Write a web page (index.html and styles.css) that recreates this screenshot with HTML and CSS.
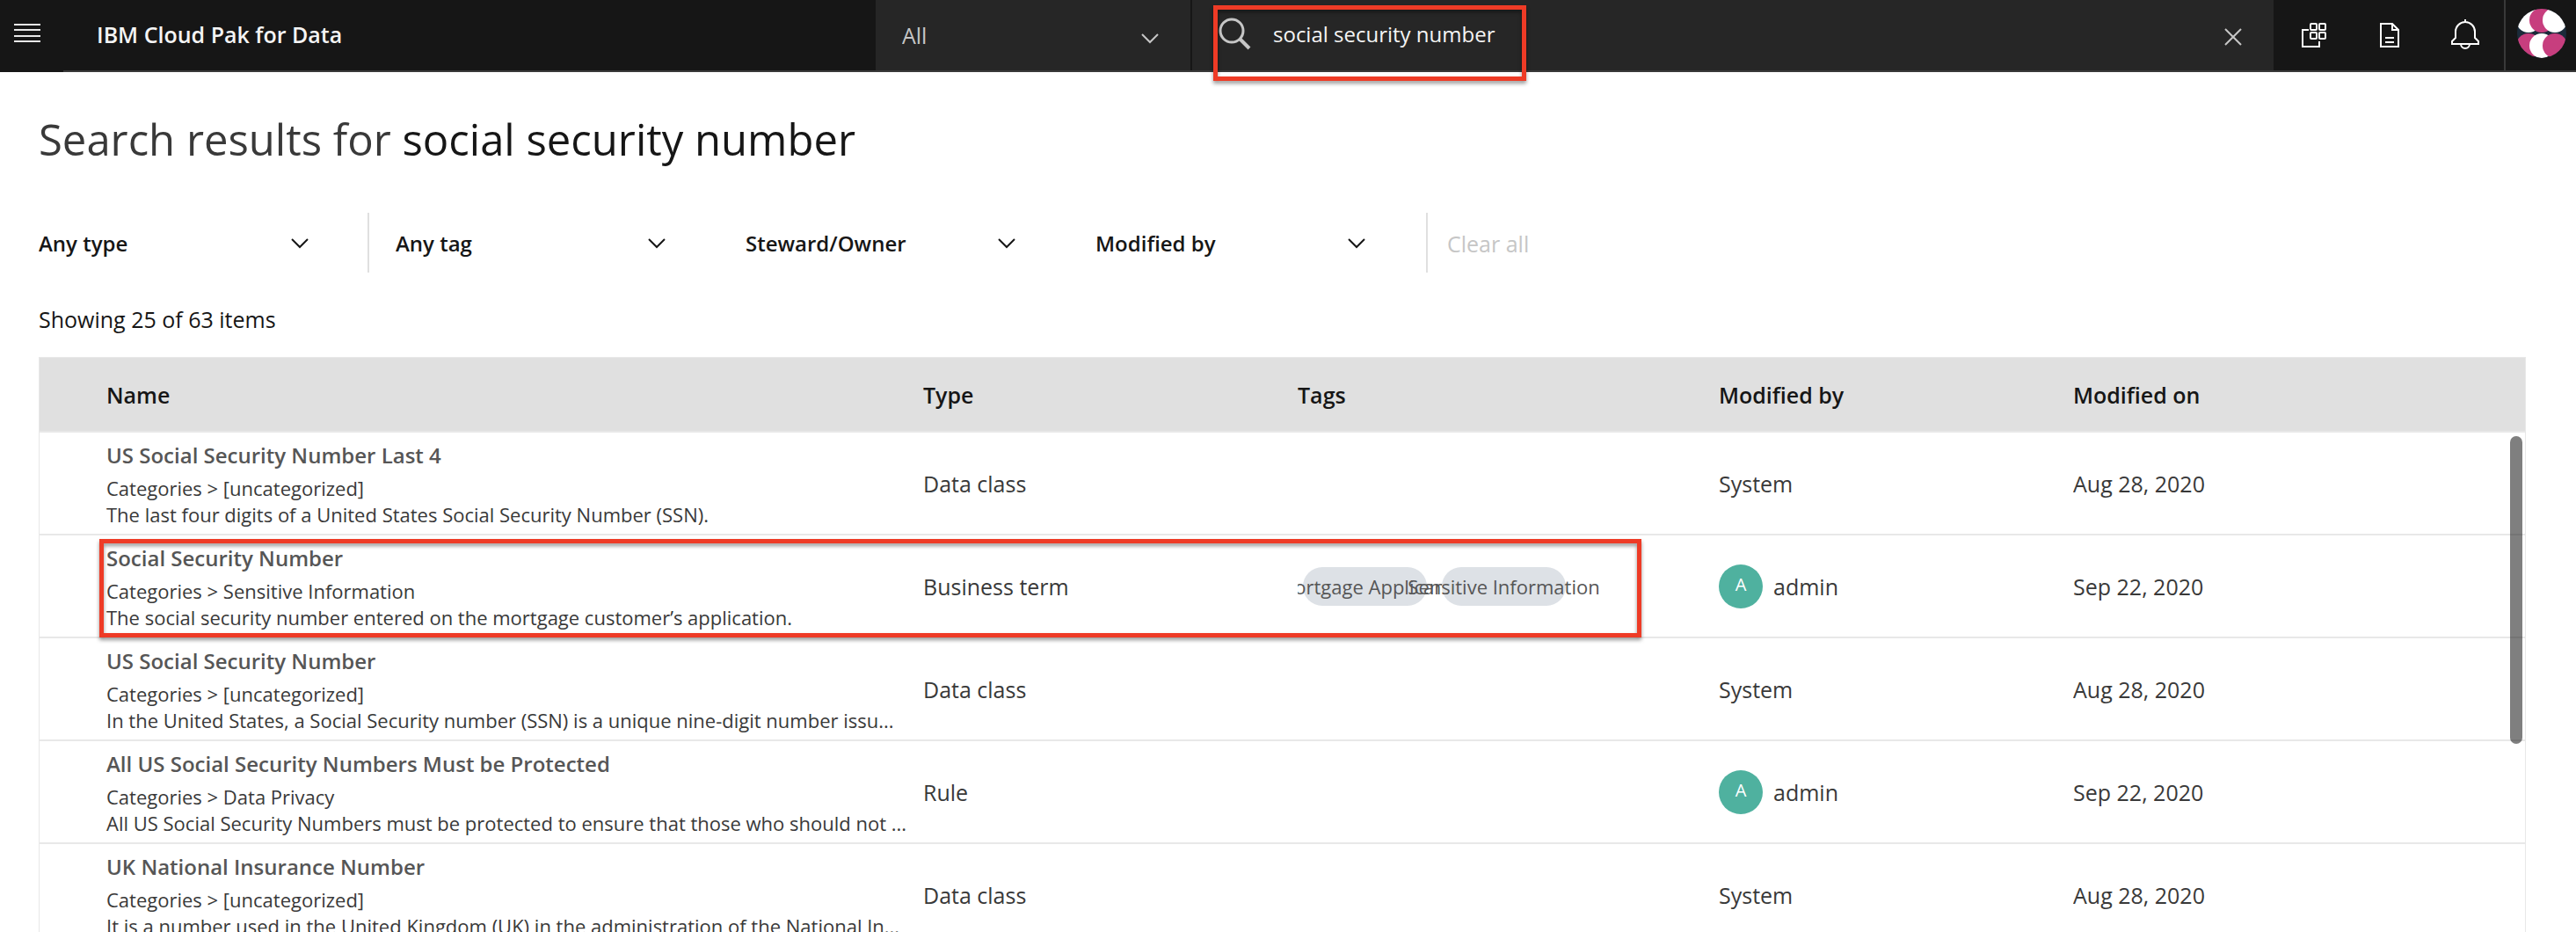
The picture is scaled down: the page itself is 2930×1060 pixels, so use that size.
FILE: index.html
```html
<!DOCTYPE html>
<html lang="en">
<head>
<meta charset="utf-8">
<title>Search results - IBM Cloud Pak for Data</title>
<link rel="stylesheet" href="styles.css">
</head>
<body>
<header class="topbar">
  <button class="menu-button" aria-label="Menu">
    <svg width="30" height="24" viewBox="0 0 30 24"><path d="M0 2h30M0 8h30M0 15h30M0 21h30" stroke="#e8e8e8" stroke-width="2"/></svg>
  </button>
  <div class="topbar-main">
    <a class="brand" href="#">IBM Cloud Pak for Data</a>
    <div class="scope">
      <select class="scope-select" aria-label="Search scope"><option>All</option></select>
      <svg class="chevron" width="20" height="12" viewBox="0 0 20 12"><path d="M1 1l9 9 9-9" fill="none" stroke="#c6c6c6" stroke-width="2"/></svg>
    </div>
    <div class="search">
      <div class="search-field">
        <svg width="38" height="38" viewBox="0 0 38 38"><circle cx="15" cy="15" r="13" fill="none" stroke="#c6c6c6" stroke-width="3"/><path d="M24 24l11 11" stroke="#c6c6c6" stroke-width="4"/></svg>
        <input class="search-input" type="text" aria-label="Search" value="social security number">
        <span class="callout callout-search"></span>
      </div>
      <button class="icon-button" aria-label="Clear search">
        <svg width="20" height="20" viewBox="0 0 20 20"><path d="M1 1l18 18M19 1L1 19" stroke="#c6c6c6" stroke-width="2"/></svg>
      </button>
    </div>
    <nav class="actions">
      <button class="icon-button" aria-label="Apps">
        <svg width="28" height="28" viewBox="0 0 28 28" fill="none" stroke="#fff" stroke-width="2"><path d="M8 8H1v19h19v-6"/><rect x="10" y="1" width="7" height="7" rx="1"/><rect x="20" y="1" width="7" height="7" rx="1"/><rect x="10" y="11" width="7" height="7" rx="1"/><rect x="20" y="11" width="7" height="7" rx="1"/></svg>
      </button>
      <button class="icon-button" aria-label="Documents">
        <svg width="22" height="28" viewBox="0 0 22 28" fill="none" stroke="#fff" stroke-width="2"><path d="M1 1h13l7 7v19H1zM14 1v7h7M6 17h10M6 22h10"/></svg>
      </button>
      <button class="icon-button" aria-label="Notifications">
        <svg width="32" height="36" viewBox="0 0 32 36" fill="none" stroke="#fff" stroke-width="2"><path d="M16 0v3M5 14a11 11 0 0 1 22 0v7l4 4v3H1v-3l4-4zM11 28a5 5 0 0 0 10 0"/></svg>
      </button>
    </nav>
    <button class="profile" aria-label="Profile">
      <svg width="58" height="58" viewBox="0 0 58 58"><defs><clipPath id="disc"><circle cx="29" cy="29" r="28"/></clipPath></defs><g clip-path="url(#disc)"><path fill="#1b2b3a" d="M0 0h58v58H0z"/><circle cx="14" cy="14" r="14" fill="#fff"/><circle cx="29" cy="14" r="14" fill="#c73e7e"/><circle cx="44" cy="14" r="14" fill="#fff"/><circle cx="14" cy="43" r="14" fill="#c73e7e"/><circle cx="29" cy="43" r="14" fill="#fff"/><circle cx="44" cy="43" r="14" fill="#c73e7e"/></g></svg>
    </button>
  </div>
</header>

<main class="page">
  <h1 class="heading">Search results for <strong>social security number</strong></h1>
  <form class="filters">
    <div class="filter filter-type">
      <select aria-label="Type"><option>Any type</option></select>
      <svg class="chevron" width="20" height="12" viewBox="0 0 20 12"><path d="M1 1l9 9 9-9" fill="none" stroke="#161616" stroke-width="2"/></svg>
    </div>
    <div class="filter">
      <select aria-label="Tag"><option>Any tag</option></select>
      <svg class="chevron" width="20" height="12" viewBox="0 0 20 12"><path d="M1 1l9 9 9-9" fill="none" stroke="#161616" stroke-width="2"/></svg>
    </div>
    <div class="filter">
      <select aria-label="Steward or owner"><option>Steward/Owner</option></select>
      <svg class="chevron" width="20" height="12" viewBox="0 0 20 12"><path d="M1 1l9 9 9-9" fill="none" stroke="#161616" stroke-width="2"/></svg>
    </div>
    <div class="filter">
      <select aria-label="Modified by"><option>Modified by</option></select>
      <svg class="chevron" width="20" height="12" viewBox="0 0 20 12"><path d="M1 1l9 9 9-9" fill="none" stroke="#161616" stroke-width="2"/></svg>
    </div>
    <button class="clear-all" type="button" disabled>Clear all</button>
  </form>
  <p class="count">Showing 25 of 63 items</p>

  <div class="results">
    <table class="results-table">
      <colgroup><col class="col-name"><col class="col-type"><col class="col-tags"><col class="col-by"><col class="col-on"></colgroup>
      <thead>
        <tr><th>Name</th><th>Type</th><th>Tags</th><th>Modified by</th><th>Modified on</th></tr>
      </thead>
      <tbody>
        <tr>
          <td><a class="name" href="#">US Social Security Number Last 4</a><div class="detail">Categories &gt; [uncategorized]</div><div class="detail">The last four digits of a United States Social Security Number (SSN).</div></td>
          <td>Data class</td><td></td><td>System</td><td>Aug 28, 2020</td>
        </tr>
        <tr class="marked">
          <td><a class="name" href="#">Social Security Number</a><div class="detail">Categories &gt; Sensitive Information</div><div class="detail">The social security number entered on the mortgage customer’s application.</div><span class="callout callout-row"></span></td>
          <td>Business term</td>
          <td><div class="tags"><span class="tag">Mortgage Applicant</span><span class="tag">Sensitive Information</span></div></td>
          <td><div class="user"><span class="badge">A</span>admin</div></td><td>Sep 22, 2020</td>
        </tr>
        <tr>
          <td><a class="name" href="#">US Social Security Number</a><div class="detail">Categories &gt; [uncategorized]</div><div class="detail">In the United States, a Social Security number (SSN) is a unique nine-digit number issu...</div></td>
          <td>Data class</td><td></td><td>System</td><td>Aug 28, 2020</td>
        </tr>
        <tr>
          <td><a class="name" href="#">All US Social Security Numbers Must be Protected</a><div class="detail">Categories &gt; Data Privacy</div><div class="detail">All US Social Security Numbers must be protected to ensure that those who should not ...</div></td>
          <td>Rule</td><td></td><td><div class="user"><span class="badge">A</span>admin</div></td><td>Sep 22, 2020</td>
        </tr>
        <tr>
          <td><a class="name" href="#">UK National Insurance Number</a><div class="detail">Categories &gt; [uncategorized]</div><div class="detail">It is a number used in the United Kingdom (UK) in the administration of the National In...</div></td>
          <td>Data class</td><td></td><td>System</td><td>Aug 28, 2020</td>
        </tr>
      </tbody>
    </table>
    <span class="scroll-thumb"></span>
  </div>
</main>
</body>
</html>
```
FILE: styles.css
```css
* { box-sizing: border-box; }

body {
  margin: 0;
  height: 100vh;
  overflow: hidden;
  display: flex;
  flex-direction: column;
  background: #fff;
  color: #393939;
  font: 25px/32px "Open Sans", "Noto Sans", sans-serif;
}

button, select, input {
  font: inherit;
  color: inherit;
  margin: 0;
  padding: 0;
  border: 0;
  border-radius: 0;
  background: none;
  appearance: none;
  outline: 0;
}

svg { display: block; flex: none; }
a { color: inherit; text-decoration: none; }

/* Top bar */
.topbar { display: flex; flex: none; height: 82px; background: #161616; color: #f4f4f4; }
.menu-button { width: 72px; padding: 0 0 6px 16px; }
.topbar-main { flex: 1; display: flex; min-width: 0; border-bottom: 2px solid #393939; }
.brand { width: 924px; padding: 23px 0 0 38px; font-weight: 600; }
.scope { width: 360px; position: relative; display: flex; background: #262626; border-right: 2px solid #161616; color: #c6c6c6; }
.scope-select { width: 100%; padding: 0 30px; }
.chevron { position: absolute; right: 36px; top: 38px; pointer-events: none; }
.search { flex: 1; display: flex; justify-content: space-between; background: #262626; }
.search-field { width: 356px; margin-left: 24px; padding: 20px 0 0 6px; position: relative; display: flex; align-items: flex-start; gap: 24px; }
.search-input { width: 280px; font-size: 24px; line-height: 38px; }
.search .icon-button { padding: 4px 36px 0; }
.icon-button { display: flex; align-items: center; justify-content: center; }
.actions { display: flex; padding: 0 1px 0 3px; border-right: 2px solid #393939; }
.actions .icon-button { width: 86px; }
.profile { width: 80px; padding: 0 0 4px 12px; }

/* Marker rectangles */
.callout { position: absolute; border: 5px solid #ee3b26; filter: drop-shadow(0 3px 2px rgba(0, 0, 0, .4)); pointer-events: none; }
.callout-search { inset: 6px 0 -12px 0; z-index: 1; }
.callout-row { left: 68px; top: 4px; width: 1754px; height: 112px; }

/* Page */
.page { flex: 1; min-height: 0; display: flex; flex-direction: column; padding: 44px 57px 0 44px; }
.heading { margin: 0; font-size: 49px; line-height: 64px; font-weight: 400; }
.heading strong { font-weight: 400; color: #161616; }
.filters { display: flex; height: 68px; margin-top: 52px; color: #161616; }
.filter { width: 398px; position: relative; display: flex; }
.filter select { width: 100%; padding-top: 2px; font-size: 24px; font-weight: 600; }
.filter .chevron { right: 91px; top: 29px; }
.filter-type { width: 376px; margin-right: 30px; border-right: 2px solid #e0e0e0; }
.filter-type .chevron { right: 67px; }
.clear-all { margin-left: -22px; padding: 2px 0 0 22px; border-left: 2px solid #e0e0e0; color: #c6c6c6; }
.count { margin: 37px 0 27px; color: #161616; }

/* Results */
.results { flex: 1; min-height: 0; overflow: hidden; position: relative; border: 1px solid #e8e8e8; border-bottom: 0; }
.results-table { width: 100%; border-collapse: separate; border-spacing: 0; table-layout: fixed; }
.col-name { width: 1005px; }
.col-type { width: 426px; }
.col-tags { width: 479px; }
.col-by { width: 403px; }
th { height: 85px; padding: 0; background: #e0e0e0; color: #161616; font-weight: 600; text-align: left; border-bottom: 2px solid #e8e8e8; }
td { height: 117px; padding: 0; border-bottom: 2px solid #e8e8e8; overflow: hidden; white-space: nowrap; }
th:first-child { padding-left: 76px; }
td:first-child { padding: 8px 0 0 76px; vertical-align: top; }
.marked { position: relative; }
.name { display: block; margin-bottom: 4px; font-size: 24px; line-height: 36px; font-weight: 600; color: #565656; }
.detail { font-size: 22px; line-height: 30px; }
.tags { display: flex; gap: 17px; padding-left: 6px; }
.tag { width: 141px; height: 44px; display: flex; justify-content: center; border-radius: 22px; background: #dde1e6; color: #565656; font-size: 22px; line-height: 44px; }
.user { display: flex; align-items: center; gap: 12px; }
.badge { width: 50px; height: 50px; border-radius: 50%; background: #4fb19f; color: #fff; font-size: 20px; line-height: 46px; text-align: center; }
.scroll-thumb { position: absolute; right: 3px; top: 89px; width: 14px; height: 350px; border-radius: 7px; background: rgba(0, 0, 0, .5); }
```
